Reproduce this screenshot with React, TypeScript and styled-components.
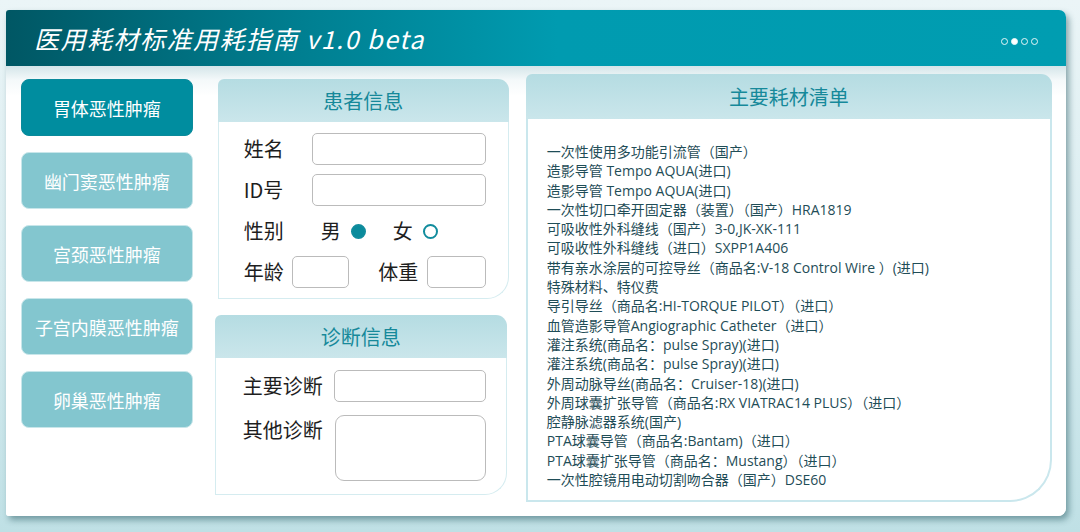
import styled, { createGlobalStyle } from 'styled-components';

const GlobalStyle = createGlobalStyle`
  html, body {
    margin: 0;
    padding: 0;
  }
  body {
    width: 1080px;
    height: 532px;
    overflow: hidden;
    background: linear-gradient(180deg, #ebf5f7 0%, #d6ebef 55%, #bfe0e5 100%);
    font-family: "Noto Sans CJK SC", "Noto Sans", sans-serif;
  }
  * {
    box-sizing: border-box;
  }
`;

const tumors = ['胃体恶性肿瘤', '幽门窦恶性肿瘤', '宫颈恶性肿瘤', '子宫内膜恶性肿瘤', '卵巢恶性肿瘤'];

const materials = [
  '一次性使用多功能引流管（国产）',
  '造影导管 Tempo AQUA(进口)',
  '造影导管 Tempo AQUA(进口)',
  '一次性切口牵开固定器（装置）（国产）HRA1819',
  '可吸收性外科缝线（国产）3-0,JK-XK-111',
  '可吸收性外科缝线（进口）SXPP1A406',
  '带有亲水涂层的可控导丝（商品名:V-18 Control Wire ）(进口)',
  '特殊材料、特仪费',
  '导引导丝（商品名:HI-TORQUE PILOT）（进口）',
  '血管造影导管Angiographic Catheter（进口）',
  '灌注系统(商品名：pulse Spray)(进口)',
  '灌注系统(商品名：pulse Spray)(进口)',
  '外周动脉导丝(商品名：Cruiser-18)(进口)',
  '外周球囊扩张导管（商品名:RX VIATRAC14 PLUS）（进口）',
  '腔静脉滤器系统(国产)',
  'PTA球囊导管（商品名:Bantam)（进口）',
  'PTA球囊扩张导管（商品名：Mustang）（进口）',
  '一次性腔镜用电动切割吻合器（国产）DSE60',
];

export default function App() {
  return (
    <Page>
      <GlobalStyle />
      <Window>
        <Header>
          <Title>医用耗材标准用耗指南 v1.0 beta</Title>
          <Dots>
            {[0, 1, 2, 3].map((i) => (
              <Dot key={i} $on={i === 1} />
            ))}
          </Dots>
        </Header>
        <Body>
          <NavColumn>
            {tumors.map((t, i) => (
              <NavButton key={t} $active={i === 0}>{t}</NavButton>
            ))}
          </NavColumn>

          <MiddleColumn>
            <PatientCard>
              <CardHead>患者信息</CardHead>
              <CardBody $pad="11px 22px 10px 25px" $gap={9}>
                <Row>
                  <Label $w={68}>姓名</Label>
                  <Input $w={176} />
                </Row>
                <Row>
                  <Label $w={68}>ID号</Label>
                  <Input $w={176} />
                </Row>
                <Row>
                  <Label $w={77}>性别</Label>
                  <Label>男</Label>
                  <Radio $checked />
                  <Label $ml={27}>女</Label>
                  <Radio />
                </Row>
                <Row>
                  <Label $w={48}>年龄</Label>
                  <Input $w={58} />
                  <Label $ml={29} $w={49}>体重</Label>
                  <Input $w={59} />
                </Row>
              </CardBody>
            </PatientCard>

            <DiagCard>
              <CardHead>诊断信息</CardHead>
              <CardBody $pad="12px 20px 13px 27px" $gap={11}>
                <Row>
                  <Label $w={91}>主要诊断</Label>
                  <Input $w={153} />
                </Row>
                <Row $top>
                  <Label $w={92} $mt={1}>其他诊断</Label>
                  <TextArea />
                </Row>
              </CardBody>
            </DiagCard>
          </MiddleColumn>

          <ListCard>
            <CardHead $h={45}>主要耗材清单</CardHead>
            <ListBody>
              {materials.map((m, i) => (
                <Item key={i}>{m}</Item>
              ))}
            </ListBody>
          </ListCard>
        </Body>
      </Window>
    </Page>
  );
}

const Page = styled.div`
  width: 1080px;
  height: 532px;
  padding: 10px 14px 16px 6px;
`;

const Window = styled.div`
  width: 1060px;
  height: 506px;
  display: flex;
  flex-direction: column;
  border-radius: 3px 7px 8px 3px;
  overflow: hidden;
  background: #fff;
  box-shadow: 3px 4px 6px rgba(20, 70, 80, 0.45);
`;

const Header = styled.div`
  height: 56px;
  flex: none;
  display: flex;
  align-items: center;
  justify-content: space-between;
  padding: 0 28px 0 28px;
  background: linear-gradient(90deg, #005764 0%, #007f91 28%, #009bb0 52%, #009db1 100%);
`;

const Title = styled.h1`
  margin: 0;
  font-size: 25px;
  font-weight: 400;
  font-style: italic;
  letter-spacing: 1.5px;
  color: #fff;
`;

const Dots = styled.div`
  display: flex;
  gap: 3px;
  margin-top: 6px;
`;

const Dot = styled.span<{ $on?: boolean }>`
  width: 7px;
  height: 7px;
  border-radius: 50%;
  border: 1px solid #e6f6f8;
  background: ${(p) => (p.$on ? '#fff' : 'transparent')};
`;

const Body = styled.div`
  flex: 1;
  display: flex;
  align-items: flex-start;
  padding: 8px 14px 0 15px;
  background: linear-gradient(180deg, #d4e5e9 0px, #f4f9fa 14px, #fff 30px);
`;

const NavColumn = styled.div`
  width: 172px;
  margin-top: 5px;
  display: flex;
  flex-direction: column;
  gap: 16px;
`;

const NavButton = styled.div<{ $active?: boolean }>`
  height: 57px;
  border-radius: 8px;
  display: flex;
  align-items: center;
  justify-content: center;
  font-size: 18px;
  color: #fff;
  background: ${(p) => (p.$active ? '#008d9f' : '#83c6cf')};
  border: 1px solid ${(p) => (p.$active ? '#0a8a9b' : '#c8e6ea')};
`;

const MiddleColumn = styled.div`
  width: 294px;
  margin-left: 22px;
  margin-top: 5px;
  display: flex;
  flex-direction: column;
  gap: 18px;
`;

const Card = styled.div`
  display: flex;
  flex-direction: column;
`;

const PatientCard = styled(Card)`
  width: 291px;
  height: 218px;
  margin-left: 3px;
`;

const DiagCard = styled(Card)`
  width: 292px;
  height: 178px;
`;

const CardHead = styled.div<{ $h?: number }>`
  height: ${(p) => p.$h ?? 43}px;
  flex: none;
  display: flex;
  align-items: center;
  justify-content: center;
  font-size: 20px;
  color: #16899a;
  border-radius: 6px 11px 0 0;
  background: linear-gradient(180deg, #b5dce2 0%, #cae6eb 100%);
`;

const CardBody = styled.div<{ $pad: string; $gap: number }>`
  flex: 1;
  display: flex;
  flex-direction: column;
  gap: ${(p) => p.$gap}px;
  padding: ${(p) => p.$pad};
  background: #fff;
  border: 1px solid #d5ecf0;
  border-top: none;
  border-radius: 0 0 22px 0;
`;

const Row = styled.div<{ $top?: boolean }>`
  display: flex;
  align-items: ${(p) => (p.$top ? 'flex-start' : 'center')};
  min-height: 32px;
`;

const Label = styled.span<{ $w?: number; $ml?: number; $mt?: number }>`
  flex: none;
  width: ${(p) => (p.$w ? `${p.$w}px` : 'auto')};
  margin-left: ${(p) => p.$ml ?? 0}px;
  margin-top: ${(p) => p.$mt ?? 0}px;
  font-size: 20px;
  line-height: 32px;
  color: #1e1e1e;
`;

const Input = styled.div<{ $w: number }>`
  width: ${(p) => p.$w}px;
  height: 32px;
  border: 1px solid #bbbbbb;
  border-radius: 5px;
  background: #fff;
`;

const TextArea = styled.div`
  width: 154px;
  height: 66px;
  margin-top: 2px;
  border: 1px solid #bbbbbb;
  border-radius: 9px;
  background: #fff;
`;

const Radio = styled.span<{ $checked?: boolean }>`
  width: 15px;
  height: 15px;
  margin-left: 10px;
  border-radius: 50%;
  border: 2px solid #118c9d;
  background: ${(p) => (p.$checked ? '#0a8b9c' : '#fff')};
`;

const ListCard = styled(Card)`
  width: 527px;
  height: 428px;
  margin-left: 17px;
`;

const ListBody = styled.div`
  flex: 1;
  padding: 23px 10px 0 19px;
  background: #fff;
  border: 2px solid #cae7ed;
  border-top: none;
  border-radius: 0 0 42px 0;
`;

const Item = styled.div`
  font-family: "Open Sans", "Noto Sans CJK SC", sans-serif;
  font-size: 14px;
  line-height: 19.3px;
  color: #1f4d57;
  white-space: nowrap;
`;
